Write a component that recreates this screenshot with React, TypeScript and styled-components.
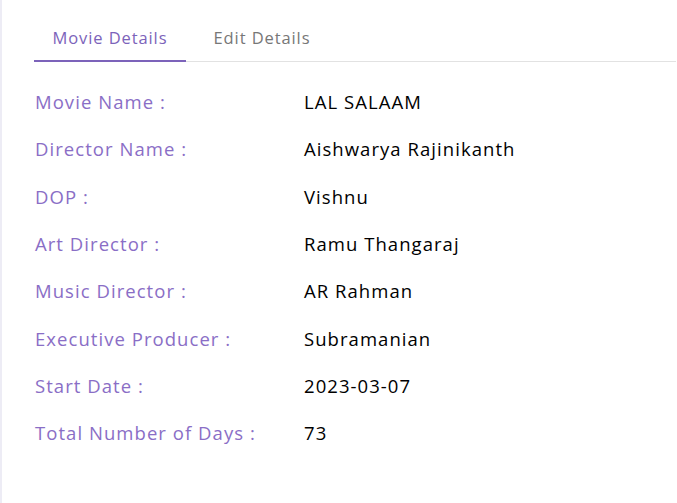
import React, { useState } from "react";
import styled, { createGlobalStyle } from "styled-components";

const GlobalStyle = createGlobalStyle`
  html, body { margin: 0; padding: 0; background: #edecf5; }
  body { font-family: "Open Sans", "Liberation Sans", sans-serif; }
  * { box-sizing: border-box; }
`;

const Card = styled.div`
  margin-left: 2px;
  min-height: 503px;
  background: #ffffff;
  padding: 17px 1px 0 32px;
`;

const TabBar = styled.div`
  display: flex;
  border-bottom: 1px solid #e2e2e2;
`;

const Tab = styled.button<{ $active: boolean }>`
  width: 152px;
  height: 45px;
  border: none;
  background: transparent;
  font-family: inherit;
  font-size: 16.5px;
  font-weight: 500;
  letter-spacing: 0.9px;
  color: ${(p) => (p.$active ? "#7c63ba" : "#777777")};
  border-bottom: 2px solid ${(p) => (p.$active ? "#7c63ba" : "transparent")};
  margin-bottom: -1px;
  padding: 0 0 3px;
  cursor: pointer;
`;

const List = styled.div`
  padding-top: 16px;
  display: flex;
  flex-direction: column;
`;

const Row = styled.div`
  display: grid;
  grid-template-columns: 269px 1fr;
  align-items: center;
  height: 47.3px;
  padding-left: 1px;
  font-size: 18.5px;
  font-weight: 500;
  letter-spacing: 1.05px;
`;

const Label = styled.span`
  color: #8a6ec6;
`;

const Value = styled.span`
  color: #000000;
`;

const details: [string, string][] = [
  ["Movie Name :", "LAL SALAAM"],
  ["Director Name :", "Aishwarya Rajinikanth"],
  ["DOP :", "Vishnu"],
  ["Art Director :", "Ramu Thangaraj"],
  ["Music Director :", "AR Rahman"],
  ["Executive Producer :", "Subramanian"],
  ["Start Date :", "2023-03-07"],
  ["Total Number of Days :", "73"],
];

export default function App() {
  const [tab, setTab] = useState(0);
  return (
    <>
      <GlobalStyle />
      <Card>
        <TabBar>
          <Tab $active={tab === 0} onClick={() => setTab(0)}>Movie Details</Tab>
          <Tab $active={tab === 1} onClick={() => setTab(1)}>Edit Details</Tab>
        </TabBar>
        <List>
          {details.map(([l, v]) => (
            <Row key={l}>
              <Label>{l}</Label>
              <Value>{v}</Value>
            </Row>
          ))}
        </List>
      </Card>
    </>
  );
}
